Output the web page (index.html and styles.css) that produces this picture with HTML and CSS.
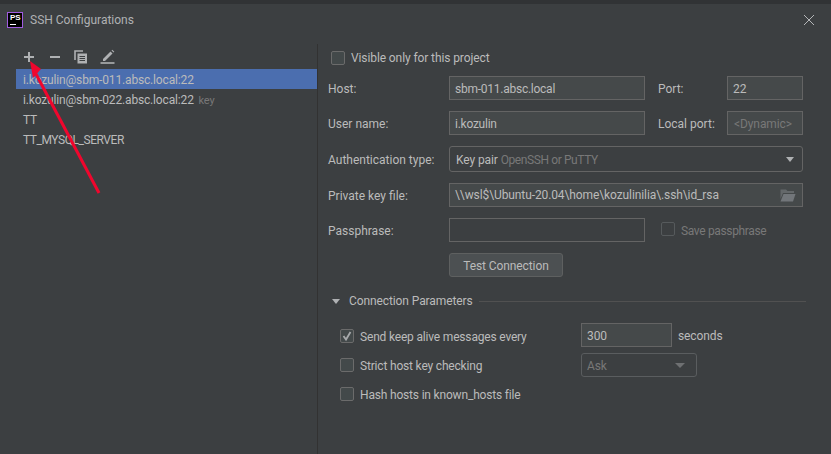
FILE: index.html
```html
<!DOCTYPE html>
<html lang="en">
  <head>
    <meta charset="UTF-8" />
    <title>SSH Configurations</title>
    <link rel="stylesheet" href="styles.css">
  </head>
  <body>
    <div class="dialog">
      <div class="titlebar">
        <div class="logo">
          <span class="logo-text">PS</span>
          <span class="logo-bar"></span>
        </div>
        <span class="title">SSH Configurations</span>
        <svg class="close" width="12" height="12" viewBox="0 0 12 12">
          <path d="M1 1L11 11M11 1L1 11" stroke="#b4b6b8" stroke-width="1" fill="none" />
        </svg>
      </div>

      <div class="content">
        <div class="sidebar">
          <div class="toolbar">
            <svg class="tool tool-plus" width="12" height="12" viewBox="0 0 12 12">
              <path d="M1 6H11M6 1V11" stroke="#afb1b3" stroke-width="2" fill="none" />
            </svg>
            <svg class="tool tool-minus" width="12" height="12" viewBox="0 0 12 12">
              <path d="M1 6H11" stroke="#afb1b3" stroke-width="2" fill="none" />
            </svg>
            <svg class="tool tool-copy" width="14" height="14" viewBox="0 0 14 14">
              <path d="M1 10V1H9" stroke="#afb1b3" stroke-width="1.6" fill="none" />
              <path d="M3.5 3.5H13V13.5H3.5Z" fill="#afb1b3" />
              <path d="M5.5 6.5H11M5.5 8.5H11M5.5 10.5H11" stroke="#3c3f41" stroke-width="1" fill="none" />
            </svg>
            <svg class="tool tool-edit" width="15" height="15" viewBox="0 0 15 15">
              <path d="M3 10L10.5 2.5L12.5 4.500L5 12H3Z" fill="#afb1b3" />
              <path d="M11.500 1.500L12.300 0.700L14.300 2.700L13.500 3.500Z" fill="#afb1b3" />
              <path d="M0.500 14H14.500" stroke="#afb1b3" stroke-width="1.600" fill="none" />
            </svg>
          </div>
          <ul class="hosts">
            <li class="host selected">i.kozulin@sbm-011.absc.local:22</li>
            <li class="host">i.kozulin@sbm-022.absc.local:22 <span class="host-note">key</span></li>
            <li class="host">TT</li>
            <li class="host host-caps">TT_MYSQL_SERVER</li>
          </ul>
        </div>

        <div class="panel">
          <label class="check check-top"><span class="box"></span><span class="check-text">Visible only for this project</span></label>

          <div class="row row-host">
            <span class="label">Host:</span>
            <div class="field field-main">sbm-011.absc.local</div>
            <span class="label label-side">Port:</span>
            <div class="field field-side">22</div>
          </div>

          <div class="row row-user">
            <span class="label">User name:</span>
            <div class="field field-main">i.kozulin</div>
            <span class="label label-side">Local port:</span>
            <div class="field field-side field-hint">&lt;Dynamic&gt;</div>
          </div>

          <div class="row row-auth">
            <span class="label">Authentication type:</span>
            <div class="combo">
              <span>Key pair <span class="muted">OpenSSH or PuTTY</span></span>
              <span class="caret"></span>
            </div>
          </div>

          <div class="row row-key">
            <span class="label">Private key file:</span>
            <div class="field field-wide">
              <span>\\wsl$\Ubuntu-20.04\home\kozulinilia\.ssh\id_rsa</span>
              <svg class="folder" width="16" height="13" viewBox="0 0 16 13">
                <path d="M0.500 3V0.500H6L7.500 2H14V4H3L0.500 10Z" fill="#64686a" />
                <path d="M3.500 5H15.500L13 12.500H0.500Z" fill="#72767a" />
              </svg>
            </div>
          </div>

          <div class="row row-pass">
            <span class="label">Passphrase:</span>
            <div class="field field-main field-empty"></div>
            <label class="check check-off"><span class="box"></span><span class="check-text">Save passphrase</span></label>
          </div>

          <button class="test-btn" type="button">Test Connection</button>

          <div class="section">
            <span class="section-caret"></span>
            <span class="section-title">Connection Parameters</span>
            <span class="section-line"></span>
          </div>

          <div class="params">
            <div class="param param-alive">
              <label class="check check-param">
                <span class="box">
                  <svg width="14" height="14" viewBox="0 0 14 14">
                    <path d="M3.500 7L6 10.500L10.500 3" stroke="#a7a9ab" stroke-width="1.800" fill="none" />
                  </svg>
                </span>
                <span class="check-text">Send keep alive messages every</span>
              </label>
              <div class="field field-num">300</div>
              <span class="unit">seconds</span>
            </div>
            <div class="param param-strict">
              <label class="check check-param"><span class="box"></span><span class="check-text">Strict host key checking</span></label>
              <div class="combo combo-off">
                <span>Ask</span>
                <span class="caret"></span>
              </div>
            </div>
            <div class="param param-hash">
              <label class="check check-param"><span class="box"></span><span class="check-text">Hash hosts in known_hosts file</span></label>
            </div>
          </div>
        </div>
      </div>
    </div>

    <!-- red annotation drawn on the screenshot -->
    <svg class="annotation" width="120" height="200" viewBox="0 0 120 200">
      <path d="M99 193L36 74" stroke="#f0062d" stroke-width="3" fill="none" />
      <path d="M30 61L41 69L33 78Z" fill="#f0062d" />
    </svg>
  </body>
</html>
```

FILE: styles.css
```css
* {
  margin: 0;
  padding: 0;
  box-sizing: border-box;
}

html,
body {
  width: 831px;
  height: 454px;
  overflow: hidden;
}

body {
  position: relative;
  background-color: #3c3f41;
  color: #bbbbbb;
  font-family: Roboto, sans-serif;
  font-size: 12px;
  letter-spacing: -0.1px;
}

.dialog {
  height: 454px;
  border-top: 4px solid #313335;
  display: flex;
  flex-direction: column;
}

/* title bar */
.titlebar {
  height: 32px;
  padding-left: 7px;
  padding-right: 16px;
  display: flex;
  align-items: center;
}

.logo {
  width: 16px;
  height: 16px;
  margin-right: 7px;
  padding: 1px 0 0 2px;
  background-color: #000;
  border: 1px solid #a05ce0;
  display: flex;
  flex-direction: column;
}

.logo-text {
  color: #fff;
  font-family: "Liberation Sans", sans-serif;
  font-size: 8px;
  font-weight: bold;
  letter-spacing: 0;
  line-height: 8px;
}

.logo-bar {
  width: 6px;
  height: 1px;
  margin-top: 2px;
  background-color: #fff;
}

.title {
  flex: 1;
  font-size: 12px;
  letter-spacing: 0;
  color: #afb1b3;
}

.content {
  flex: 1;
  display: flex;
  padding-top: 8px;
}

/* left list */
.sidebar {
  width: 318px;
  padding-left: 16px;
  border-right: 1px solid #323232;
}

.toolbar {
  height: 25px;
  display: flex;
  align-items: center;
}

.tool {
  flex: none;
}

.tool-plus {
  margin-left: 7px;
}

.tool-minus {
  margin-left: 14px;
}

.tool-copy {
  margin-left: 13px;
}

.tool-edit {
  margin-left: 12px;
}

.hosts {
  list-style: none;
}

.host {
  height: 20px;
  line-height: 21px;
  padding-top: 1px;
  padding-left: 7px;
  letter-spacing: -0.16px;
  white-space: nowrap;
}

.host-caps {
  letter-spacing: -0.45px;
}

.selected {
  background-color: #4b6eaf;
}

.host-note {
  color: #787878;
  font-size: 11px;
  margin-left: 2px;
}

/* right form */
.panel {
  flex: 1;
  padding-left: 10px;
  padding-top: 7px;
}

.row {
  display: flex;
  align-items: center;
  height: 24px;
}

.row-host {
  margin-top: 11px;
}

.row-user {
  margin-top: 11px;
}

.row-auth {
  height: 26px;
  margin-top: 11px;
}

.row-key {
  margin-top: 11px;
}

.row-pass {
  margin-top: 11px;
}

.label {
  width: 121px;
  flex: none;
  padding-top: 2px;
  letter-spacing: 0;
}

.label-side {
  width: 69px;
  margin-left: 13px;
}

.field {
  height: 24px;
  line-height: 24px;
  padding-left: 5px;
  background-color: #45494a;
  border: 1px solid #646464;
  flex: none;
}

.field-main {
  width: 196px;
  letter-spacing: -0.25px;
}

.field-empty {
  background-color: #3c3f41;
}

.field-side {
  width: 76px;
}

.field-hint {
  padding-left: 6px;
  color: #787878;
  white-space: nowrap;
  overflow: hidden;
}

.field-wide {
  width: 354px;
  display: flex;
  justify-content: space-between;
  align-items: center;
  padding-right: 6px;
}

.field-num {
  width: 91px;
}

.folder {
  flex: none;
}

.combo {
  width: 354px;
  height: 26px;
  padding: 1px 7px 0 6px;
  background-color: #3c3f41;
  border: 1px solid #646464;
  border-radius: 3px;
  display: flex;
  justify-content: space-between;
  align-items: center;
}

.muted {
  color: #787878;
  letter-spacing: -0.4px;
}

.caret {
  width: 0;
  height: 0;
  border-left: 4px solid transparent;
  border-right: 4px solid transparent;
  border-top: 5px solid #afb1b3;
  margin-right: 1px;
}

.combo-off {
  width: 116px;
  height: 24px;
  color: #787878;
  padding-left: 5px;
  border-color: #5a5d5f;
}

.combo-off .caret {
  border-top-color: #6e7072;
  border-left-width: 5px;
  border-right-width: 5px;
  margin-right: 4px;
}

/* checkboxes */
.check {
  display: flex;
  align-items: center;
  white-space: nowrap;
}

.check-text {
  padding-top: 2px;
}

.box {
  width: 14px;
  height: 14px;
  flex: none;
  margin-right: 6px;
  background-color: #43494a;
  border: 1px solid #6b6b6b;
  border-radius: 2px;
  display: flex;
}

.box svg {
  margin: -1px;
}

.check-top {
  height: 14px;
  margin-left: 3px;
}

.check-top .check-text {
  padding-top: 0;
}

.check-off {
  color: #787878;
  margin-left: 16px;
  letter-spacing: -0.35px;
}

.check-off .box {
  background-color: #3c3f41;
  border-color: #565a5c;
  margin-bottom: 2px;
}

.check-param {
  width: 241px;
  flex: none;
  letter-spacing: -0.18px;
}

.param-alive .check {
  padding-top: 2px;
}

.test-btn {
  display: block;
  width: 114px;
  height: 24px;
  margin-top: 11px;
  margin-left: 121px;
  padding-top: 1px;
  background-color: #4c5052;
  border: 1px solid #5e6060;
  border-radius: 3px;
  color: #bbbbbb;
  font-family: inherit;
  font-size: 12px;
  letter-spacing: inherit;
}

/* collapsible section */
.section {
  display: flex;
  align-items: center;
  height: 16px;
  margin-top: 16px;
}

.section-caret {
  width: 0;
  height: 0;
  margin-left: 4px;
  border-left: 4px solid transparent;
  border-right: 4px solid transparent;
  border-top: 5px solid #afb1b3;
}

.section-title {
  width: 130px;
  margin-left: 9px;
  white-space: nowrap;
}

.section-line {
  width: 327px;
  height: 1px;
  background-color: #515151;
}

.params {
  margin-left: 12px;
  margin-top: 14px;
}

.param {
  display: flex;
  align-items: center;
  height: 24px;
}

.param-strict {
  margin-top: 6px;
}

.param-hash {
  margin-top: 5px;
}

.unit {
  margin-left: 6px;
  padding-top: 2px;
}

/* screenshot markup */
.annotation {
  position: absolute;
  left: 0;
  top: 0;
}
```
